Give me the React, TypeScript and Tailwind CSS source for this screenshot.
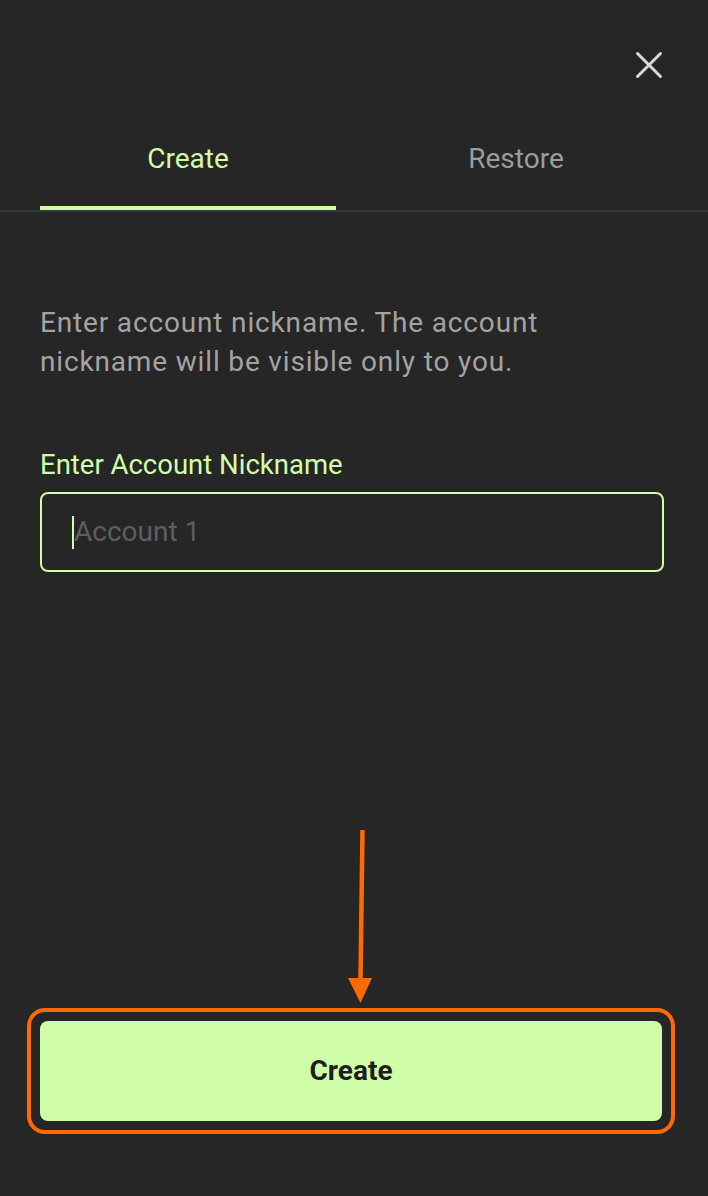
import { useState } from "react"

const tabs = ["Create", "Restore"]

export default function App() {
  const [active, setActive] = useState(0)

  return (
    <div className="flex h-[1196px] flex-col bg-[#262626] font-['Roboto','Liberation_Sans',sans-serif]">
      <div className="flex justify-end pr-[44px] pt-[50px]">
        <button className="h-[30px] w-[30px]" aria-label="Close">
          <svg width="30" height="30" viewBox="0 0 30 30" fill="none">
            <path
              d="M3.5 3.5L26.5 26.5M26.5 3.5L3.5 26.5"
              stroke="#d9d9d9"
              strokeWidth="3"
              strokeLinecap="round"
            />
          </svg>
        </button>
      </div>

      <div className="border-b-2 border-[#383838]">
        <div className="flex gap-8 pl-10 pr-[44px]">
          {tabs.map((t, i) => (
            <button
              key={t}
              onClick={() => setActive(i)}
              className="flex flex-1 flex-col items-center"
            >
              <span
                className={
                  "pt-[63px] pb-[31px] text-[28px] leading-[32px] " +
                  (active === i ? "text-[#d0fea8]" : "text-[#9c9c9c]")
                }
              >
                {t}
              </span>
              <span
                className={
                  "h-[4px] w-full " + (active === i ? "bg-[#d0fea8]" : "bg-transparent")
                }
              />
            </button>
          ))}
        </div>
      </div>

      <div className="flex flex-1 flex-col pl-10 pr-[44px]">
        <p className="mt-[91px] pr-[40px] text-[28px] leading-[39px] tracking-[0.03em] text-[#a3a3a3]">
          Enter account nickname. The account nickname will be visible only to you.
        </p>
        <label className="mt-[68px] text-[27.5px] leading-[32px] text-[#d0fea8]">
          Enter Account Nickname
        </label>
        <div className="mt-[11px] flex h-[80px] items-center rounded-[8px] border-2 border-[#d0fea8] pl-[30px]">
          <span className="h-[33px] w-[2px] bg-[#d0fea8]" />
          <span className="text-[28px] text-[#5e5e5e]">Account 1</span>
        </div>
      </div>

      <div className="ml-[348px]">
        <svg width="24" height="174" viewBox="0 0 24 174">
          <path d="M14.5 0L12.5 150" stroke="#ff6a00" strokeWidth="4.5" />
          <path d="M0 148H24L12.5 173Z" fill="#ff6a00" />
        </svg>
      </div>

      <div className="mt-[4px] mb-[62px] ml-[27px] mr-[33px] rounded-[18px] border-[4.5px] border-[#ff6a00] p-[9px]">
        <button className="flex h-[100px] w-full items-center justify-center rounded-[8px] bg-[#d0fea8] text-[28px] font-bold text-[#1e1e1e]">
          Create
        </button>
      </div>
    </div>
  )
}
